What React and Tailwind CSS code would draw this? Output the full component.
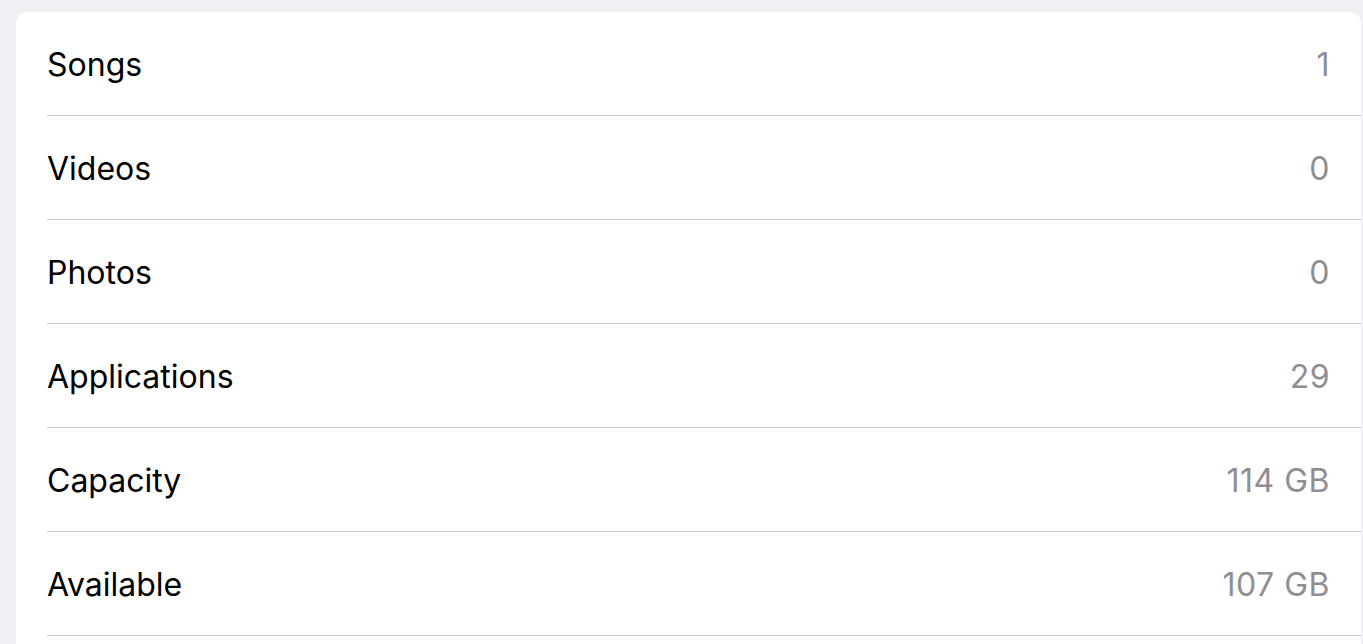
const rows = [
  { label: 'Songs', value: '1' },
  { label: 'Videos', value: '0' },
  { label: 'Photos', value: '0' },
  { label: 'Applications', value: '29' },
  { label: 'Capacity', value: '114 GB' },
  { label: 'Available', value: '107 GB' },
];

export default function App() {
  return (
    <div className="h-screen overflow-hidden bg-[#efeff4] pt-3 pl-4 pr-[2px] font-['Inter',sans-serif]">
      <div className="bg-white rounded-t-[12px] pl-[31px] h-full">
        {rows.map((row) => (
          <div
            key={row.label}
            className="flex items-center justify-between h-[104px] border-b border-[#c8c7cc] pr-[31px] pt-[2px]"
          >
            <span className="text-[32px] text-black">{row.label}</span>
            <span className="text-[32px] text-[#8e8e93] tracking-[0.5px]">{row.value}</span>
          </div>
        ))}
      </div>
    </div>
  );
}
